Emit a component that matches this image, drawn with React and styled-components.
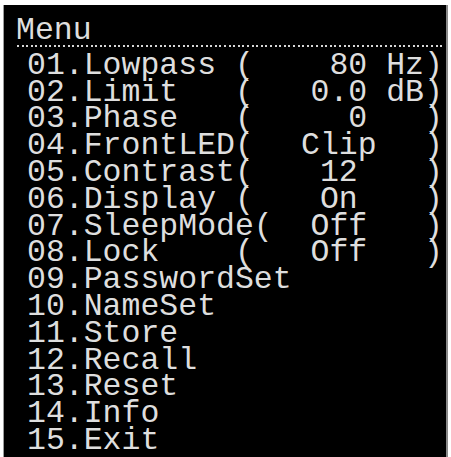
import React from 'react';
import styled, { createGlobalStyle } from 'styled-components';

const GlobalStyle = createGlobalStyle`
  html, body {
    margin: 0;
    padding: 0;
    background: #ffffff;
  }
`;

const ITEMS = [
  { label: '01.Lowpass (', value: '80', unit: 'Hz' },
  { label: '02.Limit   (', value: '0.0', unit: 'dB' },
  { label: '03.Phase   (', value: '0', unit: '' },
  { label: '04.FrontLED(', value: 'Clip', center: true },
  { label: '05.Contrast(', value: '12', center: true },
  { label: '06.Display (', value: 'On', center: true },
  { label: '07.SleepMode(', value: 'Off', center: true },
  { label: '08.Lock    (', value: 'Off', center: true },
  { label: '09.PasswordSet' },
  { label: '10.NameSet' },
  { label: '11.Store' },
  { label: '12.Recall' },
  { label: '13.Reset' },
  { label: '14.Info' },
  { label: '15.Exit' },
];

export default function App() {
  return (
    <>
      <GlobalStyle />
      <Screen>
        <Title>Menu</Title>
        <Divider />
        <List>
          {ITEMS.map((item) => (
            <Row key={item.label}>
              <Label>{item.label}</Label>
              {item.value !== undefined &&
                (item.center ? (
                  <Centered>{item.value}</Centered>
                ) : (
                  <>
                    <Value>{item.value}</Value>
                    <Unit>{item.unit}</Unit>
                  </>
                ))}
              {item.value !== undefined && <Close>)</Close>}
            </Row>
          ))}
        </List>
      </Screen>
    </>
  );
}

const Screen = styled.div`
  margin: 5px 0 0 3px;
  width: 445px;
  height: 452px;
  box-sizing: border-box;
  background: #000;
  border-left: 1px solid #9c9c9c;
  border-right: 2px solid #8a8a8a;
  padding: 13px 0 0 12px;
  overflow: hidden;
  color: #dedede;
  font-family: 'Liberation Mono', 'Courier New', monospace;
  font-size: 31.5px;
  line-height: 26.8px;
`;

const Title = styled.div`
  white-space: pre;
`;

const Divider = styled.div`
  width: 425px;
  height: 2px;
  margin: 0 0 6px 1px;
  background: repeating-linear-gradient(
    to right,
    #d6d6d6 0 2px,
    transparent 2px 4.6px
  );
`;

const List = styled.div`
  display: flex;
  flex-direction: column;
  padding-left: 11px;
`;

const Row = styled.div`
  display: grid;
  grid-template-columns: 12ch 6ch 1ch 2ch 1ch;
  white-space: pre;
`;

const Label = styled.span`
  grid-column: 1;
  overflow: visible;
`;

const Value = styled.span`
  grid-column: 2;
  text-align: right;
`;

const Unit = styled.span`
  grid-column: 4;
`;

const Centered = styled.span`
  grid-column: 2 / 5;
  text-align: center;
`;

const Close = styled.span`
  grid-column: 5;
`;
